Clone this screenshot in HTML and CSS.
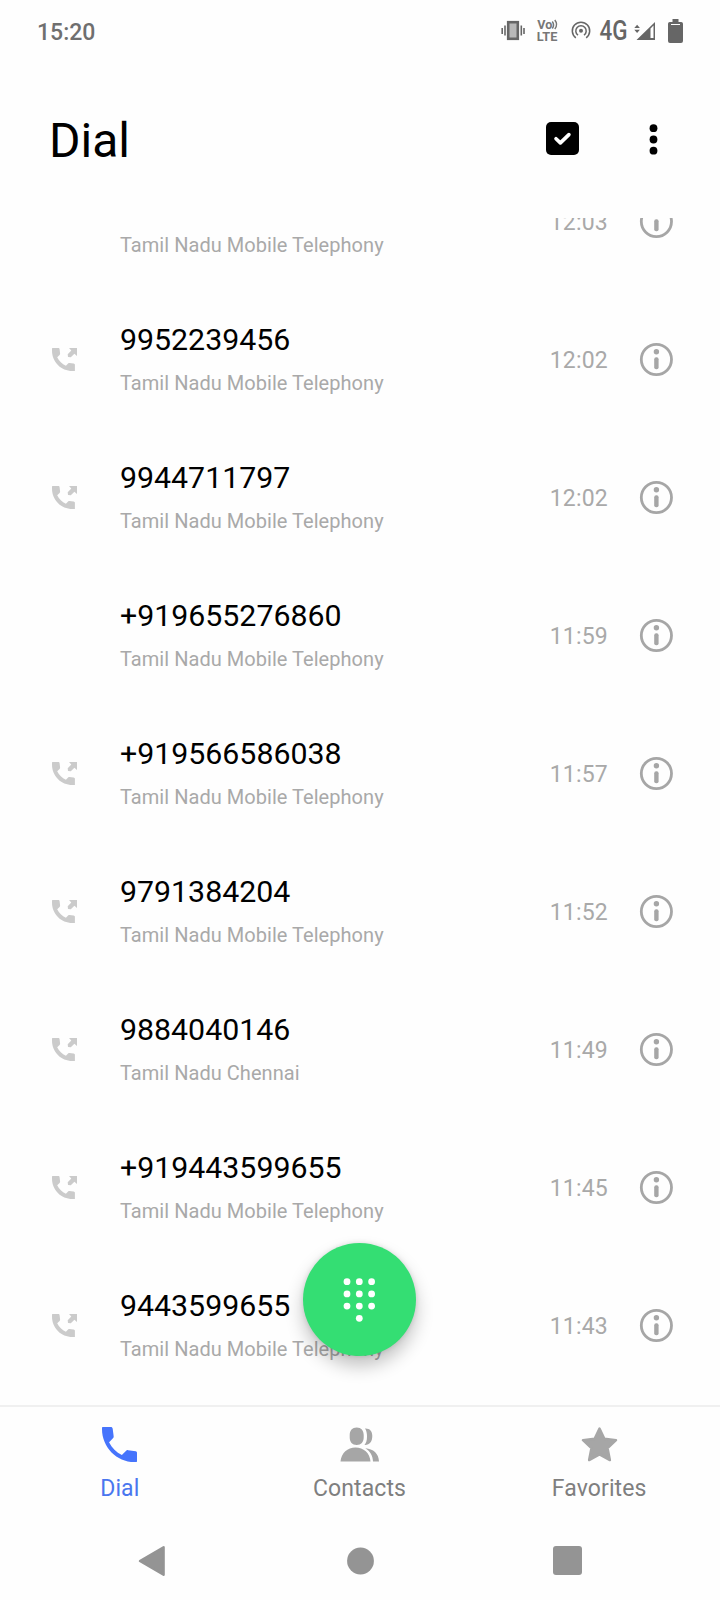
FILE: index.html
```html
<!DOCTYPE html>
<html lang="en">
<head>
    <meta charset="UTF-8">
    <meta name="viewport" content="width=device-width, initial-scale=1.0">
    <title>Dial</title>
    <link rel="stylesheet" href="styles.css">
</head>
<body>
    <svg class="defs" width="0" height="0">
        <symbol id="phone" viewBox="3 3 18 18">
            <path d="M6.62 10.79c1.44 2.83 3.76 5.14 6.59 6.59l2.2-2.2c.27-.27.67-.36 1.02-.24l3.9.5c.4.1.67.4.67.9V20.6c0 .3-.1.4-.4.4H19.6C10.61 21 3 13.39 3 4v-.6c0-.3.1-.4.4-.4h4.1c.55 0 .9.3 1 .9l.5 3.8c.05.35-.03.74-.25 1.02l-2.2 2.2z"/>
        </symbol>
        <symbol id="outgoing" viewBox="0 0 25 23">
            <path d="M.6 0h5.6c.9 0 1.3.5 1.4 1.3l.5 4.3c0 .5-.1.9-.5 1.3L5.2 9.2c1.9 3.8 4.9 6.8 8.7 8.6l2.2-2.2c.4-.4.8-.5 1.3-.5l4.2.5c.8.1 1.3.6 1.3 1.4V23h-2.4C9 23 0 14 0 2.5V.6C0 .2.2 0 .6 0z"/>
            <path d="M17 0h8v8l-2.6-2.2-3.6 3.5-2.8-.3-.3-2.7 3.6-3.7z"/>
        </symbol>
        <symbol id="info" viewBox="0 0 34 34">
            <circle cx="17.4" cy="16.5" r="15.1" fill="none" stroke="currentColor" stroke-width="2.8"/>
            <circle cx="17.4" cy="8.8" r="2.7"/>
            <rect x="15.2" y="14.3" width="4.4" height="12" rx="2"/>
        </symbol>
    </svg>

    <div class="status-bar">
        <span class="clock">15:20</span>
        <svg class="status-icons" width="190" height="32" viewBox="497 14 190 32">
            <!-- vibrate -->
            <rect x="508.2" y="22.2" width="9.6" height="16.6" fill="#b8b8b8" stroke="#666" stroke-width="2.6"/>
            <path d="M502.2 28v6M505 25.5v10M521.3 25.5v10M524 28v6" stroke="#666" stroke-width="1.6"/>
            <!-- VoLTE -->
            <text class="volte" x="537.3" y="29" textLength="15" lengthAdjust="spacingAndGlyphs">Vo</text>
            <text class="volte" x="536.8" y="41.4" textLength="20.5" lengthAdjust="spacingAndGlyphs">LTE</text>
            <path d="M552.3 21.5q2.5 3.5 0 7M554.8 20q3.5 4.5 0 9" fill="none" stroke="#777" stroke-width="1.5"/>
            <!-- hotspot -->
            <circle cx="581" cy="30.7" r="2"/>
            <path d="M578 35.2a5.2 5.2 0 1 1 6 0M575.8 37.8a8.7 8.7 0 1 1 10.4 0" fill="none" stroke="#666" stroke-width="1.5"/>
            <!-- network -->
            <text class="network" x="599.5" y="40.3" textLength="28" lengthAdjust="spacingAndGlyphs">4G</text>
            <path d="M634.3 28l2.8-3.2 2.8 3.2zM634.3 29.7l2.8 3.2 2.8-3.2z"/>
            <path fill-rule="evenodd" d="M636.5 40L655 22v18zM650.5 28.5V38h3V25.5z"/>
            <!-- battery -->
            <path fill-rule="evenodd" d="M672.5 19h6v3h2.7q1.8 0 1.8 1.8V41q0 2-2 2h-11q-2 0-2-2V23.8q0-1.8 1.8-1.8h2.7zM671 24v.9h9V24z"/>
        </svg>
    </div>

    <header>
        <h1>Dial</h1>
        <svg class="select" width="33" height="33" viewBox="0 0 33 33">
            <rect width="33" height="33" rx="5"/>
            <path d="M10 16.7l4.4 4.2 8.5-8.3" fill="none" stroke="#fff" stroke-width="3.6" stroke-linecap="round" stroke-linejoin="round"/>
        </svg>
        <svg class="more" width="9" height="32" viewBox="0 0 9 32">
            <circle cx="4.5" cy="4.2" r="3.9"/>
            <circle cx="4.5" cy="15.5" r="3.9"/>
            <circle cx="4.5" cy="26.7" r="3.9"/>
        </svg>
    </header>

    <main>
        <ul class="calls">
            <li>
                <span class="type"></span>
                <div class="caller"><b></b><small>Tamil Nadu Mobile Telephony</small></div>
                <time>12:03</time>
                <svg class="info"><use href="#info"/></svg>
            </li>
            <li>
                <svg class="type"><use href="#outgoing"/></svg>
                <div class="caller"><b>9952239456</b><small>Tamil Nadu Mobile Telephony</small></div>
                <time>12:02</time>
                <svg class="info"><use href="#info"/></svg>
            </li>
            <li>
                <svg class="type"><use href="#outgoing"/></svg>
                <div class="caller"><b>9944711797</b><small>Tamil Nadu Mobile Telephony</small></div>
                <time>12:02</time>
                <svg class="info"><use href="#info"/></svg>
            </li>
            <li>
                <span class="type"></span>
                <div class="caller"><b>+919655276860</b><small>Tamil Nadu Mobile Telephony</small></div>
                <time>11:59</time>
                <svg class="info"><use href="#info"/></svg>
            </li>
            <li>
                <svg class="type"><use href="#outgoing"/></svg>
                <div class="caller"><b>+919566586038</b><small>Tamil Nadu Mobile Telephony</small></div>
                <time>11:57</time>
                <svg class="info"><use href="#info"/></svg>
            </li>
            <li>
                <svg class="type"><use href="#outgoing"/></svg>
                <div class="caller"><b>9791384204</b><small>Tamil Nadu Mobile Telephony</small></div>
                <time>11:52</time>
                <svg class="info"><use href="#info"/></svg>
            </li>
            <li>
                <svg class="type"><use href="#outgoing"/></svg>
                <div class="caller"><b>9884040146</b><small>Tamil Nadu Chennai</small></div>
                <time>11:49</time>
                <svg class="info"><use href="#info"/></svg>
            </li>
            <li>
                <svg class="type"><use href="#outgoing"/></svg>
                <div class="caller"><b>+919443599655</b><small>Tamil Nadu Mobile Telephony</small></div>
                <time>11:45</time>
                <svg class="info"><use href="#info"/></svg>
            </li>
            <li>
                <svg class="type"><use href="#outgoing"/></svg>
                <div class="caller"><b>9443599655</b><small>Tamil Nadu Mobile Telephony</small></div>
                <time>11:43</time>
                <svg class="info"><use href="#info"/></svg>
            </li>
        </ul>
        <button class="dialpad" aria-label="Dialpad">
            <svg width="33" height="44" viewBox="0 0 33 44">
                <circle cx="4" cy="3.7" r="3.4"/><circle cx="16.3" cy="3.7" r="3.4"/><circle cx="28.6" cy="3.7" r="3.4"/>
                <circle cx="4" cy="15.9" r="3.4"/><circle cx="16.3" cy="15.9" r="3.4"/><circle cx="28.6" cy="15.9" r="3.4"/>
                <circle cx="4" cy="28.1" r="3.4"/><circle cx="16.3" cy="28.1" r="3.4"/><circle cx="28.6" cy="28.1" r="3.4"/>
                <circle cx="16.3" cy="40.3" r="3.4"/>
            </svg>
        </button>
    </main>

    <nav class="tabs">
        <a class="tab active">
            <svg width="35" height="35"><use href="#phone"/></svg>
            <span>Dial</span>
        </a>
        <a class="tab">
            <svg width="39" height="35" viewBox="-.5 0 39 35">
                <path d="M16.2.5c4.5 0 7 3 7 7.5v2.5c0 4.5-2.5 7.5-7 7.5s-7-3-7-7.5V8c0-4.5 2.5-7.5 7-7.5zM0 34.5C.8 26 7 20.5 15 20.5S29.5 26 30 34.5z"/>
                <path d="M24.5 1.5c4.5-.3 7.3 2.5 7.3 7.3 0 6.2-2.8 9.5-7.8 9.2 1.7-2 2.5-4.7 2.5-8.5 0-3.5-.6-6-2-8zM24.8 21.3c8 .5 13.4 5.2 13.7 13.2h-6c-.2-6-2.8-10.2-7.7-13.2z"/>
            </svg>
            <span>Contacts</span>
        </a>
        <a class="tab">
            <svg width="37" height="35" viewBox="0 0 37 35">
                <path d="M18.5 1.5l4.9 10.3 11.6 1.4-8.4 8 2.3 11.9-10.4-5.7-10.4 5.7 2.3-11.9-8.4-8 11.6-1.4z" stroke="currentColor" stroke-width="2.4" stroke-linejoin="round"/>
            </svg>
            <span>Favorites</span>
        </a>
    </nav>

    <div class="system-nav">
        <svg width="28" height="32" viewBox="0 0 28 32">
            <path d="M2 16L25.6 2.2v27.6z" stroke="#949494" stroke-width="2.4" stroke-linejoin="round"/>
        </svg>
        <svg width="28" height="28" viewBox="0 0 28 28"><circle cx="14.5" cy="14" r="13.4"/></svg>
        <svg width="29" height="29" viewBox="0 0 29 29"><rect width="29" height="29" rx="3"/></svg>
    </div>
</body>
</html>
```
FILE: styles.css
```css
body {
    margin: 0;
    height: 1600px;
    display: flex;
    flex-direction: column;
    overflow: hidden;
    font-family: Roboto, sans-serif;
    color: #000;
    background-color: #fefefe;
}
svg {
    display: block;
    flex: none;
}
.defs {
    position: absolute;
}
.status-bar {
    height: 60px;
    flex: none;
    display: flex;
    align-items: center;
    justify-content: space-between;
    padding: 0 33px 0 37px;
    box-sizing: border-box;
    color: #6f6f6f;
}
.clock {
    font-size: 23px;
    font-weight: 500;
    line-height: 28px;
    padding-top: 6px;
}
.status-icons {
    fill: #666;
}
.volte {
    font-size: 12px;
    font-weight: 700;
    fill: #777;
}
.network {
    font-size: 27px;
    font-weight: 500;
}
header {
    height: 158px;
    flex: none;
    display: flex;
    align-items: center;
    padding: 0 62px 1px 49px;
    box-sizing: border-box;
}
h1 {
    flex: 1;
    margin: 0;
    padding-top: 4px;
    font-size: 48px;
    font-weight: 400;
    line-height: 56px;
}
.select {
    margin-right: 70px;
}
.more {
    margin-top: 2px;
}
main {
    height: 1187px;
    flex: none;
    position: relative;
    overflow: hidden;
}
.calls {
    list-style: none;
    margin: -66px 0 0;
    padding: 0;
}
.calls li {
    height: 138px;
    display: flex;
    align-items: center;
    padding: 0 47px 0 52px;
}
.type {
    width: 25px;
    height: 23px;
    margin-right: 43px;
    fill: #cbcbcb;
}
.caller {
    flex: 1;
    padding-top: 2px;
}
.caller b {
    display: block;
    height: 46px;
    font-size: 30.3px;
    font-weight: 400;
    line-height: 45px;
}
.caller small {
    display: block;
    font-size: 20px;
    line-height: 40px;
    letter-spacing: 0.04px;
    color: #a9a9a9;
}
time {
    font-size: 23px;
    line-height: 30px;
    letter-spacing: 0.2px;
    padding-top: 3px;
    margin-right: 31px;
    color: #a9a9a9;
}
.info {
    width: 34px;
    height: 34px;
    margin-top: 1px;
    color: #a6a6a6;
    fill: #a6a6a6;
}
.dialpad {
    position: absolute;
    left: 303px;
    top: 1025px;
    width: 113px;
    height: 113px;
    padding: 0;
    display: flex;
    align-items: center;
    justify-content: center;
    border: none;
    border-radius: 50%;
    background-color: #34de73;
    fill: #fff;
    box-shadow: 0 10px 18px rgba(0, 0, 0, 0.24), 0 0 5px rgba(0, 0, 0, 0.12);
}
.tabs {
    height: 113px;
    flex: none;
    display: flex;
    padding-right: 1px;
    border-top: 2px solid #f0f0f0;
}
.tab {
    flex: 1;
    display: flex;
    flex-direction: column;
    align-items: center;
    padding-top: 20px;
    color: #7f7f7f;
    font-size: 23px;
    line-height: 30px;
    letter-spacing: 0.1px;
}
.tab svg {
    color: #a6a6a6;
    fill: #a6a6a6;
    margin-bottom: 12px;
}
.tab.active {
    color: #4a76ef;
}
.tab.active svg {
    fill: #4674fc;
}
.system-nav {
    flex: 1;
    display: flex;
    align-items: center;
    justify-content: space-between;
    padding: 1px 138px 0;
    fill: #949494;
}
```
